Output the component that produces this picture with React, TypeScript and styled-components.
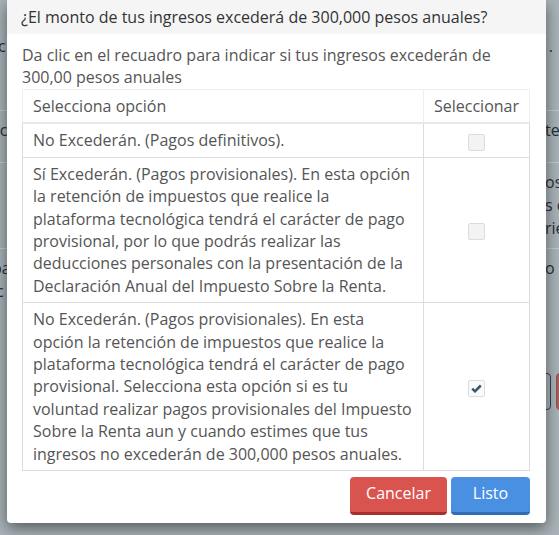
import React, { useState } from "react";
import styled, { createGlobalStyle } from "styled-components";

const GlobalStyle = createGlobalStyle`
  html, body {
    margin: 0;
    padding: 0;
    width: 559px;
    height: 535px;
    overflow: hidden;
    font-family: "Open Sans", "Liberation Sans", sans-serif;
  }
`;

interface Option {
   id: number;
   text: string;
}

const options: Option[] = [
   { id: 1, text: "No Excederán. (Pagos definitivos)." },
   {
      id: 2,
      text:
         "Sí Excederán. (Pagos provisionales). En esta opción la retención de impuestos que realice la plataforma tecnológica tendrá el carácter de pago provisional, por lo que podrás realizar las deducciones personales con la presentación de la Declaración Anual del Impuesto Sobre la Renta.",
   },
   {
      id: 3,
      text:
         "No Excederán. (Pagos provisionales). En esta opción la retención de impuestos que realice la plataforma tecnológica tendrá el carácter de pago provisional. Selecciona esta opción si es tu voluntad realizar pagos provisionales del Impuesto Sobre la Renta aun y cuando estimes que tus ingresos no excederán de 300,000 pesos anuales.",
   },
];

// filas de la página que queda detrás del modal
const backRows = [
   { left: "sc", right: ["te"], h: 52 },
   { left: "", right: ["os", "s c", "rie"], h: 77 },
   { left: "pa", right: ["o"], h: 55, extraLeft: "ic" },
];

const CheckMark = () => (
   <svg width="11" height="9" viewBox="0 0 11 9">
      <path d="M1.2 4.6 L4 7.3 L9.8 1.5" fill="none" stroke="currentColor" strokeWidth="2.5" />
   </svg>
);

const App: React.FC = () => {
   const [selected, setSelected] = useState<number>(3);

   return (
      <>
         <GlobalStyle />
         <Screen>
            <BackPage>
               <BackTitle>
                  <span>ic</span>
                  <span>.</span>
               </BackTitle>
               {backRows.map((r, i) => (
                  <BackRow key={i} $h={r.h}>
                     <BackCell>
                        {r.left}
                        {r.extraLeft && (
                           <>
                              <br />
                              {r.extraLeft}
                           </>
                        )}
                     </BackCell>
                     <BackCell $right>
                        {r.right.map((t, j) => (
                           <div key={j}>{t}</div>
                        ))}
                     </BackCell>
                  </BackRow>
               ))}
               <BackButtons>
                  <BackButton />
                  <BackButton $red />
               </BackButtons>
            </BackPage>

            <Modal>
               <Header>¿El monto de tus ingresos excederá de 300,000 pesos anuales?</Header>
               <Body>
                  <Intro>
                     Da clic en el recuadro para indicar si tus ingresos excederán de 300,00 pesos anuales
                  </Intro>
                  <Table>
                     <thead>
                        <tr>
                           <Th>Selecciona opción</Th>
                           <Th $narrow>Seleccionar</Th>
                        </tr>
                     </thead>
                     <tbody>
                        {options.map((o) => (
                           <tr key={o.id}>
                              <Td>{o.text}</Td>
                              <Td $center>
                                 <Check
                                    $checked={selected === o.id}
                                    onClick={() => setSelected(o.id)}
                                 >
                                    {selected === o.id && <CheckMark />}
                                 </Check>
                              </Td>
                           </tr>
                        ))}
                     </tbody>
                  </Table>
               </Body>
               <Footer>
                  <Button $variant="danger">Cancelar</Button>
                  <Button $variant="primary">Listo</Button>
               </Footer>
            </Modal>
         </Screen>
      </>
   );
};

export default App;

const Screen = styled.div`
  position: relative;
  width: 559px;
  height: 535px;
  overflow: hidden;
  background: #a9b3b8;
`;

const BackPage = styled.div`
  display: flex;
  flex-direction: column;
  padding-top: 35px;
  color: #2a2f33;
  font-size: 16px;
  line-height: 23px;
`;

const BackTitle = styled.div`
  display: flex;
  justify-content: space-between;
  height: 75px;
  padding: 0 6px 0 0;
  margin-left: -6px;
`;

const BackRow = styled.div<{ $h: number }>`
  display: flex;
  justify-content: space-between;
  min-height: ${({ $h }) => $h}px;
  border-top: 1px solid #c3cace;
  padding: 8px 0;
  box-sizing: border-box;
`;

const BackCell = styled.div<{ $right?: boolean }>`
  margin-left: ${({ $right }) => ($right ? "0" : "-8px")};
  margin-right: ${({ $right }) => ($right ? "-10px" : "0")};
  width: 24px;
`;

const BackButtons = styled.div`
  display: flex;
  justify-content: flex-end;
  gap: 5px;
  margin-top: 62px;
  margin-right: -37px;
`;

const BackButton = styled.div<{ $red?: boolean }>`
  width: 40px;
  height: 37px;
  border-radius: 4px;
  box-sizing: border-box;
  border: 1px solid ${({ $red }) => ($red ? "#9a4e4c" : "#3a3f42")};
  background: ${({ $red }) => ($red ? "#a2615f" : "transparent")};
`;

const Modal = styled.div`
  position: absolute;
  left: 7px;
  top: 0;
  width: 539px;
  background: #fff;
  border-radius: 0 0 4px 4px;
  box-shadow: 0 5px 15px rgba(0, 0, 0, 0.5);
  color: #555;
`;

const Header = styled.div`
  background: #f5f5f5;
  color: #333;
  font-size: 16px;
  line-height: 22px;
  padding: 6px 14px;
`;

const Body = styled.div`
  padding: 10px 16px 0 15px;
`;

const Intro = styled.p`
  margin: 0 0 1px;
  font-size: 16px;
  line-height: 22px;
  color: #555;
`;

const Table = styled.table`
  width: 100%;
  border-collapse: collapse;
  font-size: 16px;
  line-height: 22.4px;
  color: #555;
`;

const Th = styled.th<{ $narrow?: boolean }>`
  font-weight: 400;
  text-align: left;
  padding: 5px 10px;
  border: 1px solid #eee;
  border-bottom: 2px solid #e8e8e8;
  width: ${({ $narrow }) => ($narrow ? "85px" : "auto")};
`;

const Td = styled.td<{ $center?: boolean }>`
  padding: 5px 10px;
  border: 1px solid #ddd;
  text-align: ${({ $center }) => ($center ? "center" : "left")};
  vertical-align: middle;
`;

const Check = styled.span<{ $checked: boolean }>`
  display: inline-flex;
  align-items: center;
  justify-content: center;
  width: 17px;
  height: 17px;
  box-sizing: border-box;
  border: 1px solid #dcdcdc;
  border-radius: 2px;
  background: ${({ $checked }) => ($checked ? "#fafafa" : "#f3f3f3")};
  color: #3a566f;
  vertical-align: middle;
  cursor: pointer;
`;

const Footer = styled.div`
  display: flex;
  justify-content: flex-end;
  gap: 4px;
  padding: 6px 16px 8px;
`;

const Button = styled.button<{ $variant: "danger" | "primary" }>`
  font-family: "Open Sans", "Liberation Sans", sans-serif;
  font-size: 16px;
  line-height: 22px;
  color: #fff;
  border: none;
  border-radius: 4px;
  height: 38px;
  padding: 0 16px 3px;
  cursor: pointer;
  background: ${({ $variant }) => ($variant === "danger" ? "#d9534f" : "#4a90e2")};
  border-bottom: 3px solid ${({ $variant }) => ($variant === "danger" ? "#a8302c" : "#2f6db5")};
  min-width: ${({ $variant }) => ($variant === "danger" ? "97px" : "79px")};
`;
